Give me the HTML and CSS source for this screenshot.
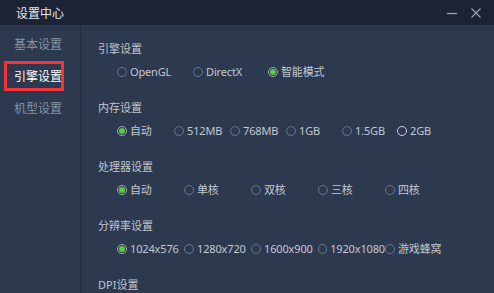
FILE: index.html
```html
<!doctype html>
<html>
    <head>
        <title>设置中心</title>
        <link rel="stylesheet" href="styles.css">
    </head>
    <body>
        <div class="titlebar">
            <span class="title">设置中心</span>
            <span class="controls">
                <svg width="12" height="12" viewBox="0 0 12 12"><path d="M1 6.5h10" stroke="#9ea6b4" stroke-width="1.3"/></svg>
                <svg width="12" height="12" viewBox="0 0 12 12"><path d="M1.5 1.5l9 9M10.5 1.5l-9 9" stroke="#9ea6b4" stroke-width="1.1"/></svg>
            </span>
        </div>

        <div class="main">
            <div class="sidebar">
                <div class="nav">基本设置</div>
                <div class="nav active">引擎设置</div>
                <div class="nav">机型设置</div>
            </div>

            <div class="content">
                <div class="section">
                    <div class="heading">引擎设置</div>
                    <div class="row engine">
                        <span class="opt"><i class="radio"></i>OpenGL</span>
                        <span class="opt"><i class="radio"></i>DirectX</span>
                        <span class="opt"><i class="radio on"></i>智能模式</span>
                    </div>
                </div>

                <div class="section">
                    <div class="heading">内存设置</div>
                    <div class="row memory">
                        <span class="opt"><i class="radio on"></i>自动</span>
                        <span class="opt"><i class="radio"></i>512MB</span>
                        <span class="opt"><i class="radio"></i>768MB</span>
                        <span class="opt"><i class="radio"></i>1GB</span>
                        <span class="opt"><i class="radio"></i>1.5GB</span>
                        <span class="opt"><i class="radio hover"></i>2GB</span>
                    </div>
                </div>

                <div class="section">
                    <div class="heading">处理器设置</div>
                    <div class="row wide">
                        <span class="opt"><i class="radio on"></i>自动</span>
                        <span class="opt"><i class="radio"></i>单核</span>
                        <span class="opt"><i class="radio"></i>双核</span>
                        <span class="opt"><i class="radio"></i>三核</span>
                        <span class="opt"><i class="radio"></i>四核</span>
                    </div>
                </div>

                <div class="section">
                    <div class="heading">分辨率设置</div>
                    <div class="row wide">
                        <span class="opt"><i class="radio on"></i>1024x576</span>
                        <span class="opt"><i class="radio"></i>1280x720</span>
                        <span class="opt"><i class="radio"></i>1600x900</span>
                        <span class="opt"><i class="radio"></i>1920x1080</span>
                        <span class="opt"><i class="radio"></i>游戏蜂窝</span>
                    </div>
                </div>

                <div class="section last">
                    <div class="heading">DPI设置</div>
                </div>
            </div>
        </div>
    </body>
</html>
```

FILE: styles.css
```css
html, body {
margin: 0;
height: 100%;
overflow: hidden;
}

body {
background-color: #2d394f;
font-family: "Noto Sans", "Noto Sans CJK SC", sans-serif;
font-size: 11px;
color: #c3c8d1;
}

.titlebar {
height: 25px;
background-color: #1b2334;
display: flex;
align-items: center;
justify-content: space-between;
padding: 0 12px 0 16px;
}

.title {
color: #e6e9ee;
font-size: 12px;
}

.controls {
display: flex;
gap: 12px;
}

.controls svg {
display: block;
}

.main {
display: flex;
height: 268px;
}

.sidebar {
width: 80px;
border-right: 1px solid #222c3c;
padding-top: 4px;
}

.nav {
width: 60px;
height: 30px;
box-sizing: border-box;
margin: 0 0 2px 4px;
padding-left: 7px;
border: 3px solid transparent;
display: flex;
align-items: center;
white-space: nowrap;
font-size: 12px;
color: #8a93a3;
}

.nav.active {
border-color: #f2353a;
color: #ffffff;
}

.content {
flex: 1;
padding: 16px 0 0 17px;
}

.section {
height: 59px;
}

.section.last {
height: auto;
}

.heading {
line-height: 16px;
color: #c0c5ce;
}

.row {
display: grid;
margin: 7px 0 0 19px;
line-height: 16px;
letter-spacing: -0.15px;
}

.engine { grid-template-columns: 76px 75px 80px; }
.memory { grid-template-columns: 57px 56px 56px 56px 55px 60px; }
.wide { grid-template-columns: 67px 67px 67px 67px 80px; }

.opt {
display: flex;
align-items: center;
white-space: nowrap;
}

.radio {
width: 10px;
height: 10px;
box-sizing: border-box;
border: 1px solid #68768f;
border-radius: 50%;
margin-right: 3px;
position: relative;
}

.radio.hover {
border: 1.5px solid #cdd2da;
}

.radio.on {
border-color: #a3abb8;
}

.radio.on:after {
content: "";
position: absolute;
left: 1px;
top: 1px;
width: 6px;
height: 6px;
border-radius: 50%;
background-color: #5ccb38;
}
```
